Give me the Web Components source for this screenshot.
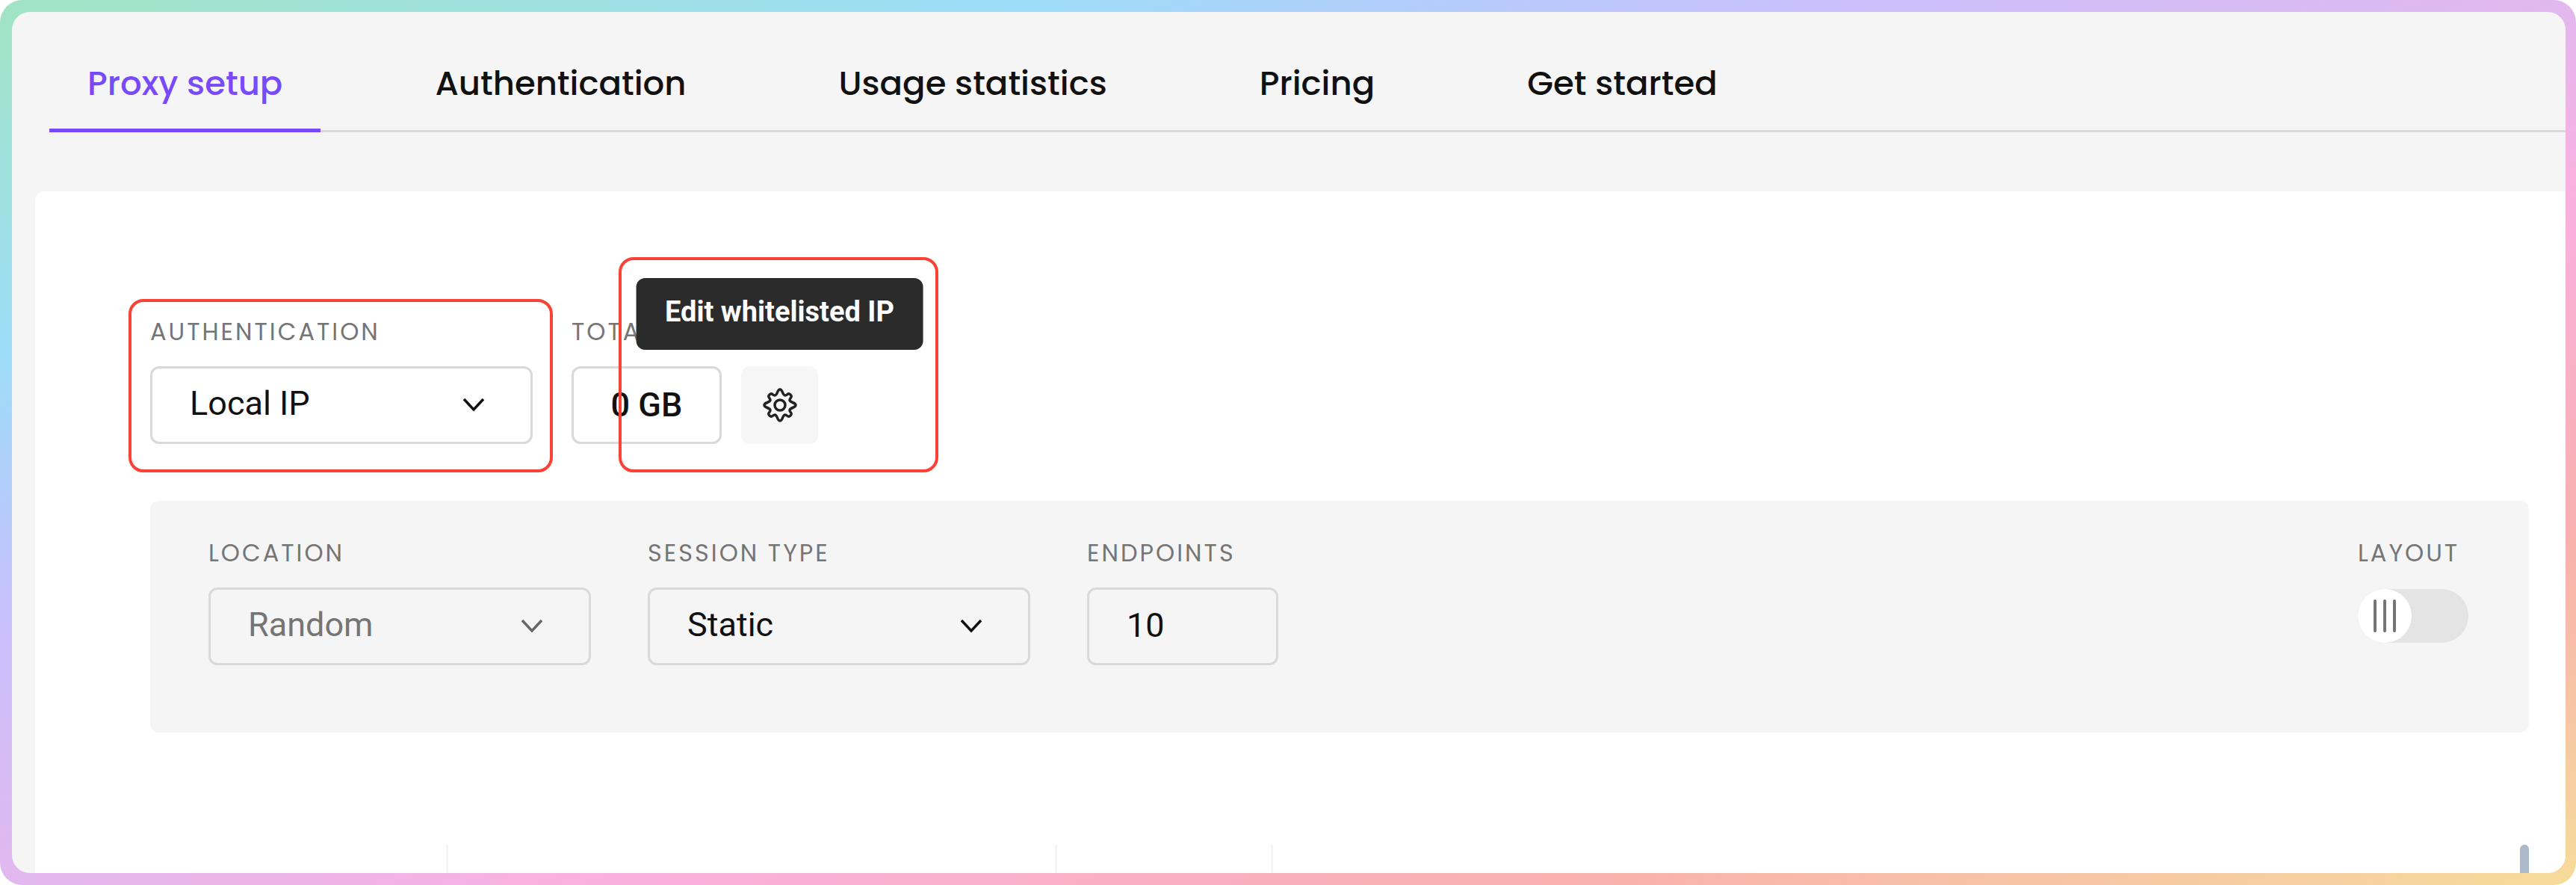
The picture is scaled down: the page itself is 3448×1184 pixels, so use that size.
<!DOCTYPE html>
<html lang="en">
<head>
<meta charset="utf-8">
<title>Proxy setup</title>
<style>
  :root {
    --primary: #784af8;
    --text: #111;
    --muted: #757575;
    --surface: #f5f5f5;
    --border: #d9d9d9;
    --highlight: #fc4234;
    --font-head: Poppins, Inter, sans-serif;
    --font-body: Roboto, sans-serif;
  }

  body {
    margin: 0;
    background: #fff;
    color: var(--text);
    font-family: var(--font-body);
  }
</style>
</head>
<body>
<app-frame>
  <tab-bar></tab-bar>
  <proxy-panel></proxy-panel>
</app-frame>

<script>
/* Rounded page with the pastel gradient border */
class AppFrame extends HTMLElement {
  constructor() {
    super();
    this.attachShadow({ mode: 'open' });
    this.shadowRoot.innerHTML = `
      <style>
        :host {
          display: flex;
          box-sizing: border-box;
          min-height: 100vh;
          padding: 16px 14px 16px 16px;
          border-radius: 30px;
          background: linear-gradient(to bottom right,
            #a0e4c2 0%, #9cdcf8 20%, #c8c0fc 35%, #e2b8ee 50%,
            #fab0e0 61%, #f9b0ae 80%, #f6c8a4 91%, #f6dc9a 100%);
        }

        .page {
          display: flex;
          flex-direction: column;
          flex: 1;
          min-width: 0;
          overflow: hidden;
          border-radius: 24px;
          background: var(--surface);
        }
      </style>
      <main class="page"><slot></slot></main>
    `;
  }
}

class TabBar extends HTMLElement {
  constructor() {
    super();
    this.attachShadow({ mode: 'open' });
    this.shadowRoot.innerHTML = `
      <style>
        :host {
          display: block;
          padding: 64px 0 0 50px;
        }

        nav {
          display: flex;
          gap: 102px;
          box-shadow: inset 0 -3px var(--border);
        }

        a {
          padding: 0 51px 28px;
          border-bottom: 5px solid transparent;
          color: var(--text);
          font: 500 45px/64px var(--font-head);
          text-decoration: none;
          white-space: nowrap;
        }

        a[aria-current] {
          color: var(--primary);
          border-color: var(--primary);
        }
      </style>
      <nav>
        <a href="#setup" aria-current="page">Proxy setup</a>
        <a href="#authentication">Authentication</a>
        <a href="#usage">Usage statistics</a>
        <a href="#pricing">Pricing</a>
        <a href="#start">Get started</a>
      </nav>
    `;
  }
}

/* Styles shared by all the labelled controls */
const fieldStyles = `
  :host {
    display: flex;
    flex-direction: column;
    gap: 25px;
    position: relative;
  }

  label {
    color: var(--muted);
    font: 400 32px/42px var(--font-head);
    letter-spacing: 3px;
    text-transform: uppercase;
    white-space: nowrap;
  }

  .control {
    box-sizing: border-box;
    width: 100%;
    height: 104px;
    margin: 0;
    border: 3px solid var(--border);
    border-radius: 12px;
    background: transparent;
    color: var(--text);
    font: 400 45px/60px var(--font-body);
  }

  select.control, input.control {
    padding: 0 50px 4px;
  }
`;

class SelectField extends HTMLElement {
  constructor() {
    super();
    this.attachShadow({ mode: 'open' });
    this.shadowRoot.innerHTML = `
      <style>
        ${fieldStyles}
        :host { width: 512px; }

        .box {
          display: grid;
          align-items: center;
        }

        .box > * { grid-area: 1 / 1; }

        select { appearance: none; }

        select:disabled {
          color: var(--muted);
          opacity: 1;
        }

        svg {
          width: 30px;
          height: 20px;
          margin-right: 64px;
          justify-self: end;
          pointer-events: none;
          fill: none;
          stroke: var(--text);
          stroke-width: 3.5;
        }

        select:disabled + svg { stroke: #666; }
      </style>
      <label for="control"></label>
      <div class="box">
        <select class="control" id="control"><option></option></select>
        <svg viewBox="0 0 30 20" aria-hidden="true"><path d="M2 2 15 16 28 2"/></svg>
      </div>
      <slot></slot>
    `;
  }

  connectedCallback() {
    this.shadowRoot.querySelector('label').textContent = this.getAttribute('label');
    this.shadowRoot.querySelector('option').textContent = this.getAttribute('value');
    this.shadowRoot.querySelector('select').disabled = this.hasAttribute('disabled');
  }
}

class NumberField extends HTMLElement {
  constructor() {
    super();
    this.attachShadow({ mode: 'open' });
    this.shadowRoot.innerHTML = `
      <style>
        ${fieldStyles}
        :host { width: 256px; }
      </style>
      <label for="control"></label>
      <input class="control" id="control" type="text" inputmode="numeric">
    `;
  }

  connectedCallback() {
    this.shadowRoot.querySelector('label').textContent = this.getAttribute('label');
    this.shadowRoot.querySelector('input').value = this.getAttribute('value');
  }
}

class TotalField extends HTMLElement {
  constructor() {
    super();
    this.attachShadow({ mode: 'open' });
    this.shadowRoot.innerHTML = `
      <style>
        ${fieldStyles}
        :host { width: 201px; }

        output.control {
          display: flex;
          align-items: center;
          justify-content: center;
          font-weight: 500;
        }
      </style>
      <label for="control">Total</label>
      <output class="control" id="control"><slot></slot></output>
    `;
  }
}

class LayoutToggle extends HTMLElement {
  constructor() {
    super();
    this.attachShadow({ mode: 'open' });
    this.shadowRoot.innerHTML = `
      <style>
        ${fieldStyles}
        input {
          appearance: none;
          width: 148px;
          height: 72px;
          margin: 2px 0;
          border-radius: 36px;
          background: #e4e4e4;
        }

        .box { display: grid; }

        .box > * { grid-area: 1 / 1; }

        svg {
          width: 72px;
          height: 72px;
          margin: 2px 0;
          pointer-events: none;
        }
      </style>
      <label for="control">Layout</label>
      <div class="box">
        <input id="control" type="checkbox" role="switch">
        <svg viewBox="0 0 72 72" aria-hidden="true">
          <circle cx="36" cy="36" r="36" fill="#fff"/>
          <path d="M23 16v40M36 16v40M49 16v40" stroke="#757575" stroke-width="4" stroke-linecap="round"/>
        </svg>
      </div>
    `;
  }
}

/* Red outline laid over the part it is slotted into */
class HighlightBox extends HTMLElement {
  constructor() {
    super();
    this.attachShadow({ mode: 'open' });
    this.shadowRoot.innerHTML = `
      <style>
        :host {
          position: absolute;
          inset: var(--reach);
          z-index: 2;
          border: 4px solid var(--highlight);
          border-radius: 20px;
          pointer-events: none;
        }
      </style>
    `;
  }
}

class SettingsButton extends HTMLElement {
  constructor() {
    super();
    this.attachShadow({ mode: 'open' });
    this.shadowRoot.innerHTML = `
      <style>
        :host {
          display: block;
          position: relative;
        }

        button {
          display: grid;
          place-items: center;
          width: 103px;
          height: 104px;
          padding: 0;
          border: 0;
          border-radius: 12px;
          background: #f6f6f6;
        }

        svg {
          width: 48px;
          height: 48px;
          fill: none;
          stroke: #222;
          stroke-width: 3.5;
        }

        .tooltip {
          position: absolute;
          bottom: calc(100% + 22px);
          left: 50%;
          transform: translateX(-50%);
          z-index: 1;
          padding: 22px 39px 28px;
          border-radius: 12px;
          background: #2b2b2b;
          color: #fff;
          font: 700 38px/46px var(--font-body);
          white-space: nowrap;
        }
      </style>
      <button type="button" aria-labelledby="tip">
        <svg viewBox="-24 -24 48 48" aria-hidden="true">
          <path d="M0-21C4-21 3-13 7-13C10-13 10.5-17.5 14-14C17.5-10.5 13-10 13-7C13-3 21-4 21 0C21 4 13 3 13 7C13 10 17.5 10.5 14 14C10.5 17.5 10 13 7 13C3 13 4 21 0 21C-4 21-3 13-7 13C-10 13-10.5 17.5-14 14C-17.5 10.5-13 10-13 7C-13 3-21 4-21 0C-21-4-13-3-13-7C-13-10-17.5-10.5-14-14C-10.5-17.5-10-13-7-13C-3-13-4-21 0-21Z"/>
          <circle r="7"/>
        </svg>
      </button>
      <div class="tooltip" id="tip" role="tooltip">Edit whitelisted IP</div>
      <slot></slot>
    `;
  }
}

class ProxyPanel extends HTMLElement {
  constructor() {
    super();
    this.attachShadow({ mode: 'open' });
    this.shadowRoot.innerHTML = `
      <style>
        :host {
          display: flex;
          flex-direction: column;
          flex: 1;
          margin: 79px 0 0 31px;
          padding: 167px 49px 0 154px;
          border-radius: 12px 0 0 0;
          background: #fff;
        }

        .row {
          display: flex;
          align-items: flex-end;
        }

        total-field { margin: 0 26px 0 52px; }

        .auth { --reach: -23px -27px -38px -29px; }

        .settings { --reach: -146px -161px -38px -164px; }

        .options {
          display: flex;
          align-items: flex-start;
          gap: 76px;
          margin-top: 76px;
          padding: 49px 81px 90px 78px;
          border-radius: 12px;
          background: var(--surface);
        }

        layout-toggle { margin-left: auto; }

        /* Top edge of the endpoint list */
        .list {
          display: grid;
          grid-template-columns: 399px 815px 289px 1fr;
          flex: 1;
          min-height: 38px;
          margin-top: 150px;
        }

        .list div:not(:last-child) { border-right: 3px solid #f5f5f5; }

        .thumb {
          width: 12px;
          justify-self: end;
          border-radius: 6px 6px 0 0;
          background: #abbaca;
        }
      </style>
      <section class="row">
        <select-field label="Authentication" value="Local IP">
          <highlight-box class="auth"></highlight-box>
        </select-field>
        <total-field>0 GB</total-field>
        <settings-button>
          <highlight-box class="settings"></highlight-box>
        </settings-button>
      </section>
      <section class="options">
        <select-field label="Location" value="Random" disabled></select-field>
        <select-field label="Session type" value="Static"></select-field>
        <number-field label="Endpoints" value="10"></number-field>
        <layout-toggle></layout-toggle>
      </section>
      <div class="list">
        <div></div>
        <div></div>
        <div></div>
        <div class="thumb"></div>
      </div>
    `;
  }
}

customElements.define('app-frame', AppFrame);
customElements.define('tab-bar', TabBar);
customElements.define('highlight-box', HighlightBox);
customElements.define('select-field', SelectField);
customElements.define('number-field', NumberField);
customElements.define('total-field', TotalField);
customElements.define('layout-toggle', LayoutToggle);
customElements.define('settings-button', SettingsButton);
customElements.define('proxy-panel', ProxyPanel);
</script>
</body>
</html>
